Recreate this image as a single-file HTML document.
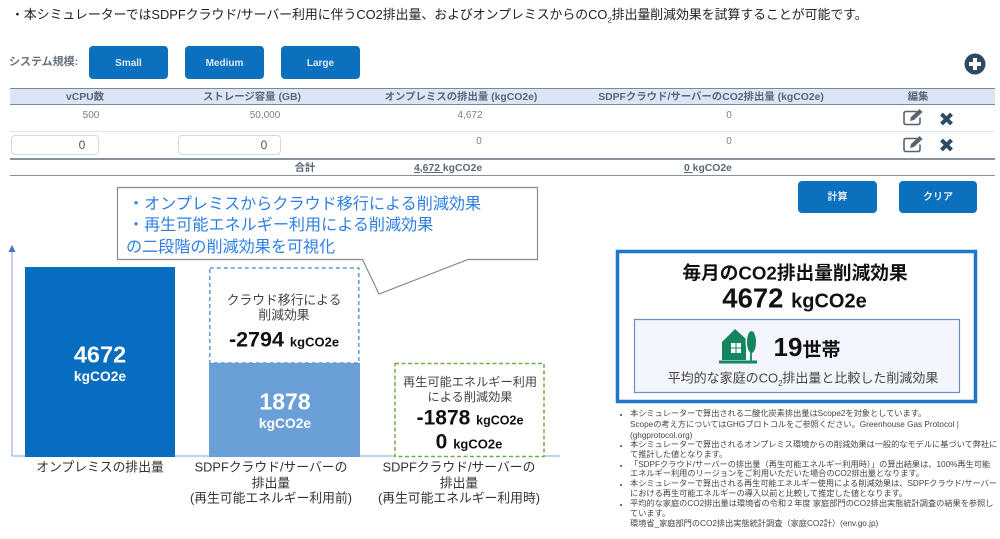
<!DOCTYPE html>
<html lang="ja"><head><meta charset="utf-8">
<style>
html,body{margin:0;padding:0;background:#fff}
#p{position:relative;width:1000px;height:539px;overflow:hidden;background:#fff;font-family:"Liberation Sans","Noto Sans CJK JP",sans-serif;color:#333}
.c{position:absolute;transform:translate(-50%,-50%);white-space:nowrap;line-height:1}
.l{position:absolute;white-space:nowrap;line-height:1}
.b{position:absolute;background:#0b70bd;border-radius:4px;color:#dfeaf5;font-size:10px;font-weight:bold;display:flex;align-items:center;justify-content:center}
.h{font-size:10.4px;font-weight:bold;color:#5b6875}
.d{font-size:10px;color:#7a7f85}
.r{position:absolute;left:10px;width:985px}
.i{position:absolute;height:20px;border:1.5px solid #d4d8dc;border-radius:4px;background:#fff;box-sizing:border-box}
sub{font-size:.6em;line-height:0}
.n{position:absolute;left:630px;font-size:8.2px;color:#444;white-space:nowrap;line-height:1}
.dot{position:absolute;left:620px;width:2px;height:2px;background:#444;border-radius:50%}
</style></head><body><div id="p">
<div class="l" style="left:11px;top:8.500px;font-size:12.87px;color:#222">・本シミュレーターではSDPFクラウド/サーバー利用に伴うCO2排出量、およびオンプレミスからのCO<sub>2</sub>排出量削減効果を試算することが可能です。</div>

<div class="l" style="left:9px;top:57px;font-size:11px;font-weight:bold;color:#68727c">システム規模:</div>
<div class="b" style="left:89px;top:46px;width:79px;height:33px;padding-bottom:0"><span style="position:relative;top:.5px">Small</span></div>
<div class="b" style="left:185px;top:46px;width:79px;height:33px"><span style="position:relative;top:.5px">Medium</span></div>
<div class="b" style="left:281px;top:46px;width:79px;height:33px"><span style="position:relative;top:.5px">Large</span></div>
<svg style="position:absolute;left:964px;top:53px" width="22" height="22" viewBox="0 0 22 22"><circle cx="11" cy="11" r="10.5" fill="#2e4963"/><path d="M11 5v12M5 11h12" stroke="#fff" stroke-width="4"/></svg>

<div class="r" style="top:88px;height:17px;background:#dbe5f5;border-top:1.5px solid #7d8894;border-bottom:1.5px solid #7d8894;box-sizing:border-box"></div>
<div class="c h" style="left:85px;top:97.500px">vCPU数</div>
<div class="c h" style="left:252px;top:97.500px">ストレージ容量 (GB)</div>
<div class="c h" style="left:461px;top:97.500px">オンプレミスの排出量 (kgCO2e)</div>
<div class="c h" style="left:711px;top:97.500px">SDPFクラウド/サーバーのCO2排出量 (kgCO2e)</div>
<div class="c h" style="left:918px;top:97.500px">編集</div>

<div class="c d" style="left:91px;top:116px">500</div>
<div class="c d" style="left:265px;top:116px">50,000</div>
<div class="c d" style="left:470px;top:116px">4,672</div>
<div class="c d" style="left:729px;top:116px">0</div>
<div class="r" style="top:131px;height:1px;background:#d9e7f3"></div>
<div class="i" style="left:11px;top:135px;width:88px"></div>
<div class="i" style="left:178px;top:135px;width:103px"></div>
<div class="c" style="left:82px;top:145px;font-size:12px;color:#555">0</div>
<div class="c" style="left:264px;top:145px;font-size:12px;color:#555">0</div>
<div class="c d" style="left:479px;top:142px">0</div>
<div class="c d" style="left:729px;top:142px">0</div>

<svg style="position:absolute;left:902px;top:108px" width="24" height="18" viewBox="0 0 24 18"><path d="M15 3.500H4Q2 3.500 2 5.500v9q0 2 2 2h12q2 0 2-2v-5" fill="none" stroke="#59636e" stroke-width="1.600"/><path d="M8 13l1-4 8.500-8 3 3-8.500 8z" fill="#59636e"/></svg>
<svg style="position:absolute;left:902px;top:135px" width="24" height="18" viewBox="0 0 24 18"><path d="M15 3.500H4Q2 3.500 2 5.500v9q0 2 2 2h12q2 0 2-2v-5" fill="none" stroke="#59636e" stroke-width="1.600"/><path d="M8 13l1-4 8.500-8 3 3-8.500 8z" fill="#59636e"/></svg>
<svg style="position:absolute;left:939px;top:112px" width="15" height="14" viewBox="0 0 15 14"><path d="M2.500 2l10 10M12.500 2l-10 10" stroke="#2e4963" stroke-width="4"/></svg>
<svg style="position:absolute;left:939px;top:138px" width="15" height="14" viewBox="0 0 15 14"><path d="M2.500 2l10 10M12.500 2l-10 10" stroke="#2e4963" stroke-width="4"/></svg>

<div class="r" style="top:158px;height:18px;border-top:2px solid #87929c;border-bottom:1.5px solid #87929c;box-sizing:border-box"></div>
<div class="c h" style="left:305px;top:168.500px">合計</div>
<div class="l h" style="left:414px;top:163.500px"><u>4,672 </u>kgCO2e</div>
<div class="l h" style="left:684px;top:163.500px"><u>0 </u>kgCO2e</div>
<div class="b" style="left:798px;top:181px;width:79px;height:32px"><span style="position:relative;top:-2px">計算</span></div>
<div class="b" style="left:899px;top:181px;width:78px;height:32px"><span style="position:relative;top:-2px">クリア</span></div>

<svg style="position:absolute;left:0;top:0" width="1000" height="539">
<path d="M117.500 187.500H537.500V259.500H468L379 294 362.500 259.500H117.500Z" fill="#fff" stroke="#8a8a8a" stroke-width="1.200"/>
<path d="M12 250V456H560" fill="none" stroke="#86a4d8" stroke-width="1"/>
<path d="M12 245l-3.500 7h7z" fill="#4472c4"/>
<rect x="25" y="267" width="150" height="190" fill="#066dbf"/>
<rect x="209" y="363" width="151" height="94" fill="#6b9fd8"/>
<rect x="209.800" y="268" width="149" height="95" fill="#fff" stroke="#5b9bd5" stroke-width="1.500" stroke-dasharray="4 3"/>
<rect x="395" y="363.500" width="149" height="93" fill="#fff" stroke="#70ad47" stroke-width="1.500" stroke-dasharray="4 2.500"/>
<rect x="617.500" y="251.500" width="358" height="150" fill="#fff" stroke="#1f75c8" stroke-width="3.500"/>
<rect x="634.500" y="319.500" width="325" height="73" fill="#f3f6fc" stroke="#6f8bc0" stroke-width="1.200"/>
<path d="M735 329L746 339V360H722V342Z" fill="#13855f"/>
<path d="M719 362h38" stroke="#13855f" stroke-width="3"/>
<ellipse cx="751.500" cy="342" rx="6" ry="13" fill="#f3f6fc"/>
<ellipse cx="751.500" cy="342" rx="4.500" ry="11" fill="#13855f"/>
<path d="M751 345v16" stroke="#13855f" stroke-width="1.800"/>
<path d="M731 343h4.500v4.500H731zM736.500 343H741v4.500h-4.500zM731 348.500h4.500v4.500H731zM736.500 348.500H741v4.500h-4.500z" fill="#fff"/>
</svg>

<div class="l" style="left:128px;top:196px;font-size:16.100px;color:#2f7fe3">・オンプレミスからクラウド移行による削減効果</div>
<div class="l" style="left:128px;top:217px;font-size:16.100px;color:#2f7fe3">・再生可能エネルギー利用による削減効果</div>
<div class="l" style="left:126px;top:238.500px;font-size:16.100px;color:#2f7fe3">の二段階の削減効果を可視化</div>

<div class="c" style="left:100px;top:355px;font-size:23.500px;font-weight:bold;color:#fff">4672</div>
<div class="c" style="left:100px;top:377px;font-size:13.800px;font-weight:bold;color:#fff">kgCO2e</div>
<div class="c" style="left:285px;top:402px;font-size:23px;font-weight:bold;color:#fff">1878</div>
<div class="c" style="left:285px;top:424px;font-size:13.800px;font-weight:bold;color:#fff">kgCO2e</div>

<div class="c" style="left:284px;top:301px;font-size:12.800px;color:#444">クラウド移行による</div>
<div class="c" style="left:284px;top:316px;font-size:12.800px;color:#444">削減効果</div>
<div class="c" style="left:284px;top:340px;font-weight:bold;color:#111;font-size:21.500px">-2794 <span style="font-size:13px">kgCO2e</span></div>

<div class="c" style="left:470px;top:381.500px;font-size:12.200px;color:#444">再生可能エネルギー利用</div>
<div class="c" style="left:470px;top:396.500px;font-size:12.200px;color:#444">による削減効果</div>
<div class="c" style="left:470px;top:418px;font-weight:bold;color:#111;font-size:21px">-1878 <span style="font-size:12.500px">kgCO2e</span></div>
<div class="c" style="left:469px;top:442px;font-weight:bold;color:#111;font-size:21px">0 <span style="font-size:13px">kgCO2e</span></div>

<div class="c" style="left:100px;top:468px;font-size:12.800px;color:#333">オンプレミスの排出量</div>
<div class="c" style="left:271px;top:468px;font-size:12.800px;color:#333">SDPFクラウド/サーバーの</div>
<div class="c" style="left:271px;top:484px;font-size:12.800px;color:#333">排出量</div>
<div class="c" style="left:271px;top:499px;font-size:12.800px;color:#333">(再生可能エネルギー利用前)</div>
<div class="c" style="left:459px;top:468px;font-size:12.800px;color:#333">SDPFクラウド/サーバーの</div>
<div class="c" style="left:459px;top:484px;font-size:12.800px;color:#333">排出量</div>
<div class="c" style="left:459px;top:499px;font-size:12.800px;color:#333">(再生可能エネルギー利用時)</div>

<div class="c" style="left:795px;top:274px;font-size:18.700px;font-weight:bold;color:#111">毎月のCO2排出量削減効果</div>
<div class="c" style="left:794.500px;top:298px;font-weight:bold;color:#111;font-size:27.500px">4672 <span style="font-size:20px">kgCO2e</span></div>
<div class="c" style="left:807px;top:347px;font-weight:bold;color:#111;font-size:26px">19<span style="font-size:19px">世帯</span></div>
<div class="c" style="left:803px;top:378px;font-size:13px;color:#444">平均的な家庭のCO<sub>2</sub>排出量と比較した削減効果</div>

<div class="dot" style="top:414px"></div><div class="dot" style="top:445px"></div><div class="dot" style="top:465px"></div><div class="dot" style="top:484px"></div><div class="dot" style="top:504px"></div>
<div class="n" style="top:410px">本シミュレーターで算出される二酸化炭素排出量はScope2を対象としています。</div>
<div class="n" style="top:421px">Scopeの考え方についてはGHGプロトコルをご参照ください。Greenhouse Gas Protocol |</div>
<div class="n" style="top:432px">(ghgprotocol.org)</div>
<div class="n" style="top:441px">本シミュレーターで算出されるオンプレミス環境からの削減効果は一般的なモデルに基づいて弊社に</div>
<div class="n" style="top:451px">て推計した値となります。</div>
<div class="n" style="top:461px">「SDPFクラウド/サーバーの排出量（再生可能エネルギー利用時）」の算出結果は、100%再生可能</div>
<div class="n" style="top:470px">エネルギー利用のリージョンをご利用いただいた場合のCO2排出量となります。</div>
<div class="n" style="top:480px">本シミュレーターで算出される再生可能エネルギー使用による削減効果は、SDPFクラウド/サーバー</div>
<div class="n" style="top:490px">における再生可能エネルギーの導入以前と比較して推定した値となります。</div>
<div class="n" style="top:500px">平均的な家庭のCO2排出量は環境省の令和２年度 家庭部門のCO2排出実態統計調査の結果を参照し</div>
<div class="n" style="top:510px">ています。</div>
<div class="n" style="top:520px">環境省_家庭部門のCO2排出実態統計調査（家庭CO2計）(env.go.jp)</div>
</div></body></html>
